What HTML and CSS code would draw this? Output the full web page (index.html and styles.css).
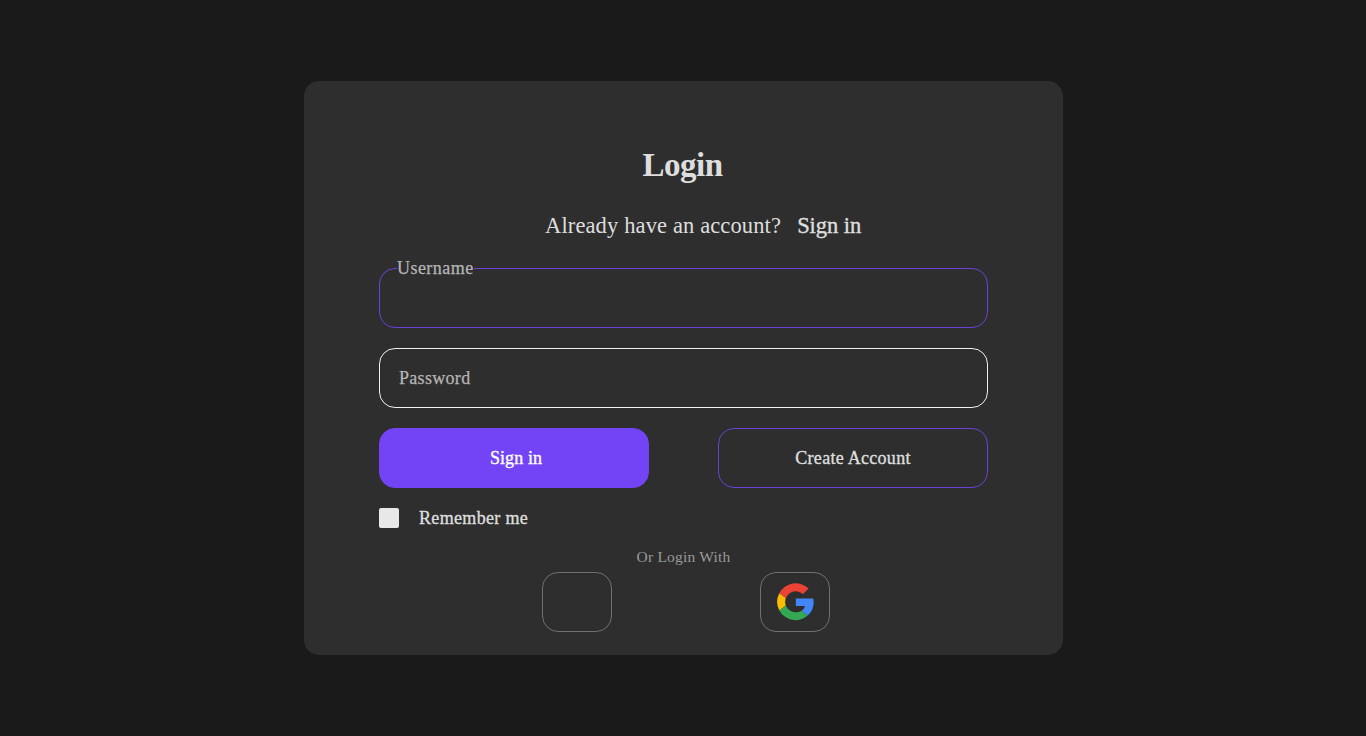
FILE: index.html
```html
<!DOCTYPE html>
<html lang="en">
<head>
<meta charset="utf-8">
<title>Login</title>
<link rel="stylesheet" href="styles.css">
</head>
<body>
<main class="card">
  <h1 class="title">Login</h1>
  <p class="prompt"><span class="question">Already have an account?</span><a class="link">Sign in</a></p>
  <form class="form">
    <div class="field active"><label class="label floating">Username</label></div>
    <div class="field"><label class="label">Password</label></div>
    <div class="actions">
      <button type="button" class="btn primary">Sign in</button>
      <button type="button" class="btn outline">Create Account</button>
    </div>
    <div class="remember"><span class="box"></span><span class="remember-text">Remember me</span></div>
  </form>
  <p class="divider">Or Login With</p>
  <div class="socials">
    <button type="button" class="social"></button>
    <button type="button" class="social">
      <svg class="google" viewBox="0 0 37 38">
        <path fill="#EA4335" d="M2.3 10.2A18.5 18.5 0 0 1 31.6 5.6L26.1 11.1A10.8 10.8 0 0 0 8.8 15.2z"/>
        <path fill="#FBBC05" d="M2.3 10.2A18.7 18.7 0 0 0 2.3 27.4L8.8 22.4A11 11 0 0 1 8.8 15.2z"/>
        <path fill="#34A853" d="M2.3 27.4A18.5 18.5 0 0 0 30.7 32.6L24.6 27.8A10.9 10.9 0 0 1 8.8 22.4z"/>
        <path fill="#4285F4" d="M18.8 15.6H36.2A18 18 0 0 1 30.7 32.6L24.6 27.8A8 8 0 0 0 28 22.9H18.8z"/>
      </svg>
    </button>
  </div>
</main>
</body>
</html>
```
FILE: styles.css
```css
* { box-sizing: border-box; }
body {
  margin: 0;
  height: 736px;
  overflow: hidden;
  display: flex;
  align-items: center;
  justify-content: center;
  background: #1a1a1a;
  color: #dedede;
  font-family: "Liberation Serif", serif;
}
.card {
  width: 759px;
  height: 574px;
  margin-left: 1px;
  padding: 64px 75px 0;
  background: #2e2e2e;
  border-radius: 15px;
}
.title {
  margin: 0 2px 0 0;
  height: 40px;
  line-height: 41px;
  text-align: center;
  font-size: 33px;
  letter-spacing: -0.5px;
}
.prompt {
  display: flex;
  gap: 16px;
  margin: 26px 0 0 166px;
  height: 30px;
  line-height: 30px;
  font-size: 22.5px;
  white-space: nowrap;
}
.question { letter-spacing: 0.13px; }
.link {
  letter-spacing: -0.05px;
  -webkit-text-stroke: 0.4px currentColor;
}
.form {
  display: flex;
  flex-direction: column;
  gap: 20px;
  margin-top: 27px;
  font-size: 18px;
}
.field {
  display: flex;
  align-items: center;
  height: 60px;
  padding-left: 19px;
  border: 1px solid #f0f0f0;
  border-radius: 16px;
}
.active {
  align-items: flex-start;
  padding-left: 17px;
  border-color: #6a42d6;
}
.label {
  line-height: 20px;
  color: #b5b5b5;
  letter-spacing: 0.31px;
  -webkit-text-stroke: 0.25px currentColor;
}
.floating {
  margin-top: -11px;
  background: #2e2e2e;
  letter-spacing: 0.45px;
}
.actions { display: flex; justify-content: space-between; }
.btn {
  width: 270px;
  height: 60px;
  padding: 0;
  border: 1px solid #6a42d6;
  border-radius: 16px;
  background: none;
  color: #dedede;
  font: 18px "Liberation Serif", serif;
  letter-spacing: 0.28px;
  -webkit-text-stroke: 0.35px currentColor;
}
.primary {
  padding-left: 4px;
  background: #7344f5;
  border-color: #7344f5;
  color: #fff;
  letter-spacing: 0.1px;
}
.remember {
  display: flex;
  align-items: center;
  gap: 20px;
  height: 20px;
}
.box {
  width: 20px;
  height: 20px;
  border-radius: 2px;
  background: #e8e8e8;
}
.remember-text {
  letter-spacing: 0.34px;
  -webkit-text-stroke: 0.35px currentColor;
}
.divider {
  margin: 19px 0 0;
  height: 20px;
  line-height: 20px;
  text-align: center;
  font-size: 15.5px;
  letter-spacing: 0.2px;
  color: #999;
}
.socials {
  display: flex;
  gap: 148px;
  margin: 5px 0 0 163px;
}
.social {
  display: flex;
  align-items: center;
  justify-content: center;
  width: 70px;
  height: 60px;
  padding: 0;
  border: 1px solid #707070;
  border-radius: 16px;
  background: none;
}
.google { width: 37px; height: 38px; }
```
